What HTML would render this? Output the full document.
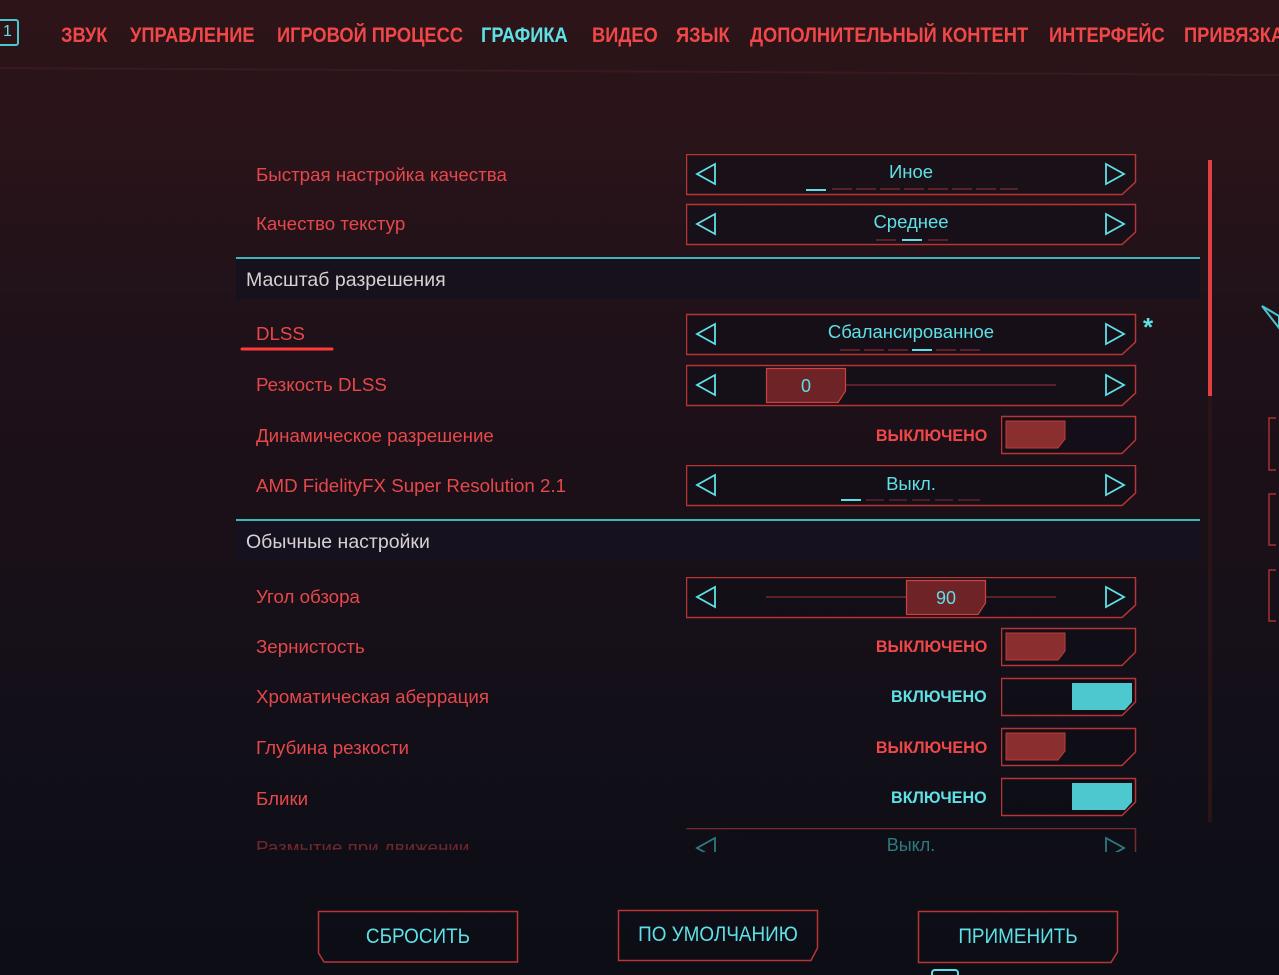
<!DOCTYPE html>
<html><head><meta charset="utf-8">
<style>
*{margin:0;padding:0;box-sizing:border-box}
body{width:1279px;height:975px;overflow:hidden;position:relative;font-family:"Liberation Sans",sans-serif;
background:linear-gradient(180deg,#2c1418 0%,#2a1419 12%,#1f1119 35%,#1a1018 55%,#120f18 75%,#0c0d15 100%);}
.a{position:absolute;white-space:nowrap}
.nav{top:24px;font-size:21px;color:#f04848;transform:scaleX(.87);transform-origin:left top;font-weight:bold}
.lbl{font-size:18px;color:#e5484a;left:256px;transform:scaleX(1.04);transform-origin:left center;line-height:20px}
.hdr{left:236px;width:964px;height:42px;background:rgba(20,18,32,.75);border-top:2px solid #3fb5b8}
.hdr span{position:absolute;left:10px;top:10px;font-size:19.5px;color:#d8d0d0}
.val{position:absolute;left:0;width:450px;text-align:center;top:7px;font-size:18.5px;color:#5ee0e6}
.st{font-size:17px;transform:scaleX(.95);transform-origin:right center;right:292px;font-weight:bold}
.btn{width:200px;height:52px}
.btn span{position:absolute;left:0;width:200px;text-align:center;top:14px;font-size:21px;color:#5ee0e6;transform:scaleX(.9)}
</style></head><body>
<svg class="a" style="left:0;top:0" width="1279" height="975">
<rect x="-6" y="20" width="24" height="25" rx="2" fill="none" stroke="#4cc6cc" stroke-width="2"/>
<line x1="0" y1="68" x2="1279" y2="75" stroke="#3a1a1e" stroke-width="2"/>
<rect x="1208" y="390" width="4" height="432" fill="#2a1418"/>
<rect x="1208" y="160" width="4" height="236" fill="#e0403f"/>
<polygon points="1262,306 1279,316 1279,328" fill="none" stroke="#4cc6cc" stroke-width="2"/>
<g fill="none" stroke="#a8302f" stroke-width="1.5">
<path d="M1276,418 H1269 V470 H1276"/><path d="M1276,494 H1269 V545 H1276"/><path d="M1276,570 H1269 V621 H1276"/>
</g>
<line x1="242" y1="349" x2="332" y2="349" stroke="#ff3a3a" stroke-width="3" stroke-linecap="round"/>
</svg>

<div class="a" style="left:3px;top:23px;font-size:16px;color:#5ee0e6">1</div>
<div class="a nav" style="left:61px">ЗВУК</div>
<div class="a nav" style="left:130px">УПРАВЛЕНИЕ</div>
<div class="a nav" style="left:277px">ИГРОВОЙ ПРОЦЕСС</div>
<div class="a nav" style="left:481px;color:#5ee0e6">ГРАФИКА</div>
<div class="a nav" style="left:592px">ВИДЕО</div>
<div class="a nav" style="left:676px">ЯЗЫК</div>
<div class="a nav" style="left:750px">ДОПОЛНИТЕЛЬНЫЙ КОНТЕНТ</div>
<div class="a nav" style="left:1049px">ИНТЕРФЕЙС</div>
<div class="a nav" style="left:1184px">ПРИВЯЗКА</div>

<div class="a hdr" style="top:257px"><span>Масштаб разрешения</span></div>
<div class="a hdr" style="top:519px"><span>Обычные настройки</span></div>

<div class="a lbl" style="top:165px">Быстрая настройка качества</div>
<div class="a lbl" style="top:214px">Качество текстур</div>
<div class="a lbl" style="top:324px">DLSS</div>
<div class="a lbl" style="top:375px">Резкость DLSS</div>
<div class="a lbl" style="top:426px">Динамическое разрешение</div>
<div class="a lbl" style="top:476px">AMD FidelityFX Super Resolution 2.1</div>
<div class="a lbl" style="top:587px">Угол обзора</div>
<div class="a lbl" style="top:637px">Зернистость</div>
<div class="a lbl" style="top:687px">Хроматическая аберрация</div>
<div class="a lbl" style="top:738px">Глубина резкости</div>
<div class="a lbl" style="top:789px">Блики</div>
<div class="a lbl" style="top:838px;opacity:.45;clip-path:inset(0 0 8px 0)">Размытие при движении</div>

<svg class="a" style="left:686px;top:154px" width="451" height="300">
<defs>
<g id="bx"><path d="M0.5,0.5 H449.5 V28 L436,40.5 H0.5 Z" fill="rgba(14,14,24,.55)" stroke="#b83536" stroke-width="1.5"/>
<polygon points="29,10 11,20 29,30" fill="none" stroke="#5ee0e6" stroke-width="1.8"/>
<polygon points="420,10 438,20 420,30" fill="none" stroke="#5ee0e6" stroke-width="1.8"/></g>
</defs>
<use href="#bx" y="0"/>
<use href="#bx" y="50"/>
<use href="#bx" y="160"/>
<use href="#bx" y="211"/>
<g stroke-width="2">
<line x1="120" y1="36" x2="140" y2="36" stroke="#5ee0e6"/>
<g stroke="#5a2228"><line x1="146" y1="35" x2="166" y2="35"/><line x1="170" y1="35" x2="190" y2="35"/><line x1="194" y1="35" x2="214" y2="35"/><line x1="218" y1="35" x2="238" y2="35"/><line x1="242" y1="35" x2="262" y2="35"/><line x1="266" y1="35" x2="286" y2="35"/><line x1="290" y1="35" x2="310" y2="35"/><line x1="314" y1="35" x2="332" y2="35"/></g>
<line x1="190" y1="86" x2="210" y2="86" stroke="#5a2228"/><line x1="216" y1="86" x2="236" y2="86" stroke="#5ee0e6"/><line x1="242" y1="86" x2="262" y2="86" stroke="#5a2228"/>
<g stroke="#5a2228"><line x1="154" y1="196" x2="174" y2="196"/><line x1="178" y1="196" x2="198" y2="196"/><line x1="202" y1="196" x2="222" y2="196"/><line x1="250" y1="196" x2="270" y2="196"/><line x1="274" y1="196" x2="294" y2="196"/></g>
<line x1="226" y1="196" x2="246" y2="196" stroke="#5ee0e6"/>
<line x1="160" y1="231" x2="370" y2="231" stroke="#5a2228"/>
</g>
<path d="M80.5,214.5 H159.5 V237 L152,248.5 H80.5 Z" fill="#6e2327" stroke="#d0403f" stroke-width="1.2"/>
</svg>
<div class="a" style="left:686px;top:154px;width:450px"><div class="val">Иное</div></div>
<div class="a" style="left:686px;top:204px;width:450px"><div class="val">Среднее</div></div>
<div class="a" style="left:686px;top:314px;width:450px"><div class="val">Сбалансированное</div></div>
<div class="a" style="left:766px;top:376px;width:80px;text-align:center;font-size:18px;color:#5ee0e6">0</div>
<div class="a" style="left:1143px;top:312px;font-size:26px;color:#5ee0e6;font-weight:bold">*</div>

<svg class="a" style="left:686px;top:465px" width="451" height="45">
<path d="M0.5,0.5 H449.5 V28 L436,40.5 H0.5 Z" fill="rgba(14,14,24,.55)" stroke="#b83536" stroke-width="1.5"/>
<polygon points="29,10 11,20 29,30" fill="none" stroke="#5ee0e6" stroke-width="1.8"/>
<polygon points="420,10 438,20 420,30" fill="none" stroke="#5ee0e6" stroke-width="1.8"/>
<g stroke-width="2"><line x1="155" y1="35" x2="175" y2="35" stroke="#5ee0e6"/>
<g stroke="#4a2028"><line x1="180" y1="35" x2="198" y2="35"/><line x1="203" y1="35" x2="221" y2="35"/><line x1="226" y1="35" x2="244" y2="35"/><line x1="249" y1="35" x2="267" y2="35"/><line x1="272" y1="35" x2="294" y2="35"/></g></g>
</svg>
<div class="a" style="left:686px;top:465px;width:450px"><div class="val" style="top:8px">Выкл.</div></div>

<svg class="a" style="left:686px;top:577px" width="451" height="45">
<path d="M0.5,0.5 H449.5 V28 L436,40.5 H0.5 Z" fill="rgba(14,14,24,.55)" stroke="#b83536" stroke-width="1.5"/>
<polygon points="29,10 11,20 29,30" fill="none" stroke="#5ee0e6" stroke-width="1.8"/>
<polygon points="420,10 438,20 420,30" fill="none" stroke="#5ee0e6" stroke-width="1.8"/>
<line x1="80" y1="20" x2="370" y2="20" stroke="#5a2228" stroke-width="2"/>
<path d="M220.5,3.5 H299.5 V26 L292,37.5 H220.5 Z" fill="#6e2327" stroke="#d0403f" stroke-width="1.2"/>
</svg>
<div class="a" style="left:906px;top:588px;width:80px;text-align:center;font-size:18px;color:#5ee0e6">90</div>

<svg class="a" style="left:686px;top:828px" width="451" height="24">
<path d="M0.5,0.5 H449.5 V28" fill="rgba(14,14,24,.55)" stroke="#7a2a2c" stroke-width="1.5"/>
<polygon points="29,10 11,20 29,30" fill="none" stroke="#2e7a80" stroke-width="1.8"/>
<polygon points="420,10 438,20 420,30" fill="none" stroke="#2e7a80" stroke-width="1.8"/>
</svg>
<div class="a" style="left:686px;top:835px;width:450px;text-align:center;font-size:18px;color:#2e7a80;height:17px;overflow:hidden">Выкл.</div>

<svg class="a" style="left:1001px;top:0" width="136" height="830">
<defs>
<path id="tb" d="M0.5,0.5 H134.5 V24 L121,37.5 H0.5 Z" fill="rgba(14,14,24,.6)" stroke="#b83536" stroke-width="1.5"/>
<path id="off" d="M5,5 H64 V23 L57,32 H5 Z" fill="#8a2e2f" stroke="#c03c3a" stroke-width="1"/>
<path id="on" d="M71,5 H131 V24 L124,32 H71 Z" fill="#4cc8ce"/>
</defs>
<g transform="translate(0,416)"><use href="#tb"/><use href="#off"/></g>
<g transform="translate(0,628)"><use href="#tb"/><use href="#off"/></g>
<g transform="translate(0,678)"><use href="#tb"/><use href="#on"/></g>
<g transform="translate(0,728)"><use href="#tb"/><use href="#off"/></g>
<g transform="translate(0,778)"><use href="#tb"/><use href="#on"/></g>
</svg>
<div class="a st" style="top:426px;color:#f04848">ВЫКЛЮЧЕНО</div>
<div class="a st" style="top:637px;color:#f04848">ВЫКЛЮЧЕНО</div>
<div class="a st" style="top:687px;color:#5ee0e6">ВКЛЮЧЕНО</div>
<div class="a st" style="top:738px;color:#f04848">ВЫКЛЮЧЕНО</div>
<div class="a st" style="top:788px;color:#5ee0e6">ВКЛЮЧЕНО</div>

<svg class="a" style="left:0;top:900px" width="1279" height="75">
<path d="M318.5,11.5 H517.5 V62 H324 L318.5,53 Z" fill="rgba(14,14,24,.5)" stroke="#b83536" stroke-width="1.5"/>
<path d="M618.5,10.5 H817.5 V48 L811,60.5 H618.5 Z" fill="rgba(14,14,24,.5)" stroke="#b83536" stroke-width="1.5"/>
<path d="M918.5,11.5 H1117.5 V52 L1111,62.5 H918.5 Z" fill="rgba(14,14,24,.5)" stroke="#b83536" stroke-width="1.5"/>
<rect x="932" y="70" width="26" height="10" rx="3" fill="none" stroke="#5ee0e6" stroke-width="2"/>
</svg>
<div class="a btn" style="left:318px;top:911px"><span>СБРОСИТЬ</span></div>
<div class="a btn" style="left:618px;top:909px"><span>ПО УМОЛЧАНИЮ</span></div>
<div class="a btn" style="left:918px;top:911px"><span>ПРИМЕНИТЬ</span></div>
</body></html>
